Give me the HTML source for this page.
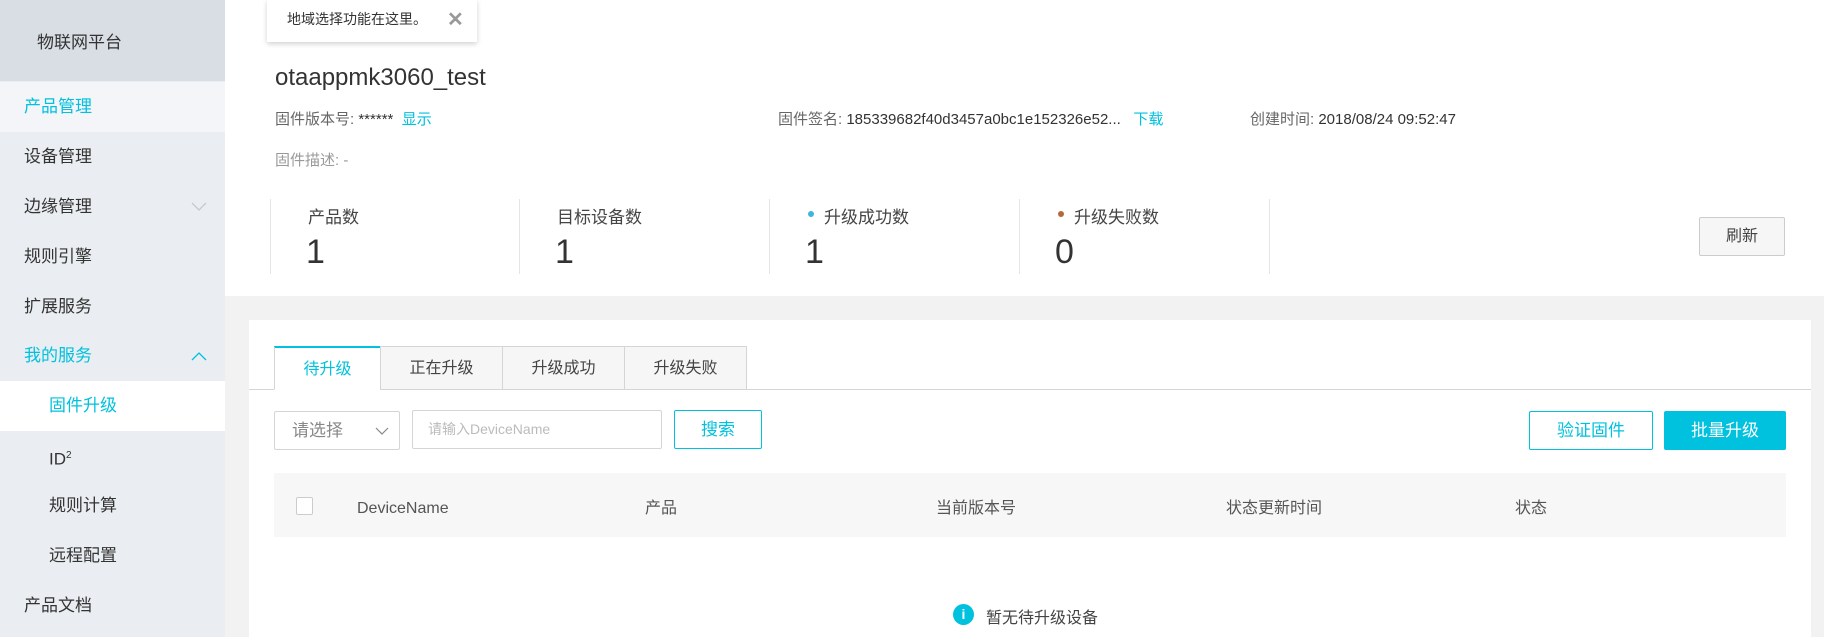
<!DOCTYPE html>
<html><head><meta charset="utf-8"><style>
*{margin:0;padding:0;box-sizing:border-box}
body{width:1824px;height:637px;overflow:hidden;background:#f2f2f2;font-family:"Liberation Sans","Noto Sans CJK SC",sans-serif;color:#333;position:relative}
.a{position:absolute;white-space:nowrap}
.side{left:0;top:0;width:225px;height:637px;background:#eaedf1}
.mi{position:absolute;left:0;width:225px;height:50px;line-height:50px;font-size:17px;color:#333;padding-left:24px}
.sub{padding-left:49px}
.c{color:#00c1de}
.lbl{font-size:15px;color:#666}
.btn{position:absolute;height:39px;line-height:37px;text-align:center;font-size:17px;border-radius:2px}
.tab{position:absolute;top:346px;height:44px;line-height:44px;text-align:center;font-size:16px;border:1px solid #d5d5d5;background:#f6f6f6;color:#444}
.th{position:absolute;top:499px;font-size:16px;color:#555;line-height:20px;height:20px}
</style></head><body>
<div class="a side"></div>
<div class="a" style="left:0;top:0;width:225px;height:81px;background:#d9dde4"></div>
<div class="a" style="left:37px;top:28px;font-size:17px;color:#333">物联网平台</div>
<div class="mi c" style="top:82px;background:#f4f5f8">产品管理</div>
<div class="mi" style="top:132px">设备管理</div>
<div class="mi" style="top:182px">边缘管理<svg style="position:absolute;left:191px;top:20px" width="16" height="10"><path d="M1 1l7 7 7-7" fill="none" stroke="#c5c9d0" stroke-width="1.3"/></svg></div>
<div class="mi" style="top:232px">规则引擎</div>
<div class="mi" style="top:282px">扩展服务</div>
<div class="mi c" style="top:331px">我的服务<svg style="position:absolute;left:191px;top:20px" width="16" height="10"><path d="M1 9l7-7 7 7" fill="none" stroke="#00c1de" stroke-width="1.3"/></svg></div>
<div class="mi sub c" style="top:381px;background:#fff">固件升级</div>
<div class="mi sub" style="top:431px">ID<sup style="font-size:10px">2</sup></div>
<div class="mi sub" style="top:481px">规则计算</div>
<div class="mi sub" style="top:531px">远程配置</div>
<div class="mi" style="top:581px">产品文档</div>

<div class="a" style="left:225px;top:0;width:1599px;height:296px;background:#fff"></div>
<div class="a" style="left:267px;top:0;width:210px;height:42px;background:#fff;box-shadow:0 2px 5px rgba(0,0,0,.18);font-size:14px;line-height:38px;padding-left:20px">地域选择功能在这里。<span style="position:absolute;left:180px;top:1px;font-size:20px;color:#999;font-weight:bold">✕</span></div>
<div class="a" style="left:275px;top:64px;font-size:24px;color:#333">otaappmk3060_test</div>
<div class="a lbl" style="left:275px;top:108px">固件版本号: <span style="color:#333">******</span>&nbsp; <span class="c">显示</span></div>
<div class="a lbl" style="left:778px;top:108px">固件签名: <span style="color:#333">185339682f40d3457a0bc1e152326e52...</span>&nbsp;&nbsp; <span class="c">下载</span></div>
<div class="a lbl" style="left:1250px;top:108px">创建时间: <span style="color:#333">2018/08/24 09:52:47</span></div>
<div class="a lbl" style="left:275px;top:149px;color:#999">固件描述: -</div>
<div class="a" style="left:270px;top:199px;width:1px;height:75px;background:#e5e5e5"></div>
<div class="a" style="left:519px;top:199px;width:1px;height:75px;background:#e5e5e5"></div>
<div class="a" style="left:769px;top:199px;width:1px;height:75px;background:#e5e5e5"></div>
<div class="a" style="left:1019px;top:199px;width:1px;height:75px;background:#e5e5e5"></div>
<div class="a" style="left:1269px;top:199px;width:1px;height:75px;background:#e5e5e5"></div>
<div class="a" style="left:308px;top:203px;font-size:17px;color:#444">产品数</div>
<div class="a" style="left:557px;top:203px;font-size:17px;color:#444">目标设备数</div>
<div class="a" style="left:808px;top:211px;width:6px;height:6px;border-radius:3px;background:#3fb4dd"></div>
<div class="a" style="left:824px;top:203px;font-size:17px;color:#444">升级成功数</div>
<div class="a" style="left:1058px;top:211px;width:6px;height:6px;border-radius:3px;background:#b5693a"></div>
<div class="a" style="left:1074px;top:203px;font-size:17px;color:#444">升级失败数</div>
<div class="a" style="left:306px;top:233px;font-size:34px;color:#333">1</div>
<div class="a" style="left:555px;top:233px;font-size:34px;color:#333">1</div>
<div class="a" style="left:805px;top:233px;font-size:34px;color:#333">1</div>
<div class="a" style="left:1055px;top:233px;font-size:34px;color:#333">0</div>
<div class="btn" style="left:1699px;top:217px;width:86px;border:1px solid #ccc;background:#f6f6f6;color:#444;font-size:16px">刷新</div>

<div class="a" style="left:249px;top:320px;width:1562px;height:317px;background:#fff"></div>
<div class="a" style="left:249px;top:389px;width:1562px;height:1px;background:#d5d5d5"></div>
<div class="tab" style="left:274px;width:107px;background:#fff;border-top:2px solid #00c1de;border-bottom:1px solid #fff;color:#00c1de">待升级</div>
<div class="tab" style="left:380px;width:123px">正在升级</div>
<div class="tab" style="left:502px;width:123px">升级成功</div>
<div class="tab" style="left:624px;width:123px">升级失败</div>
<div class="btn" style="left:274px;top:411px;width:126px;border:1px solid #d5d5d5;text-align:left;padding-left:17px;color:#888">请选择<svg style="position:absolute;left:100px;top:15px" width="14" height="9"><path d="M1 1l6 6 6-6" fill="none" stroke="#888" stroke-width="1.2"/></svg></div>
<div class="btn" style="left:412px;top:410px;width:250px;border:1px solid #d5d5d5;text-align:left;padding-left:15px;color:#bbb;font-size:14px">请输入DeviceName</div>
<div class="btn" style="left:674px;top:410px;width:88px;border:1px solid #00c1de;color:#00c1de">搜索</div>
<div class="btn" style="left:1529px;top:411px;width:124px;border:1px solid #00c1de;color:#00c1de">验证固件</div>
<div class="btn" style="left:1664px;top:411px;width:122px;background:#00c1de;border:1px solid #00c1de;color:#fff">批量升级</div>
<div class="a" style="left:274px;top:473px;width:1512px;height:64px;background:#f7f7f7"></div>
<div class="a" style="left:296px;top:497px;width:17px;height:18px;border:1px solid #ccc;border-radius:2px;background:#fff"></div>
<div class="th" style="left:357px">DeviceName</div>
<div class="th" style="left:645px">产品</div>
<div class="th" style="left:936px">当前版本号</div>
<div class="th" style="left:1226px">状态更新时间</div>
<div class="th" style="left:1515px">状态</div>
<div class="a" style="left:953px;top:604px;width:21px;height:21px;border-radius:50%;background:#00c1de;color:#fff;font-size:14px;font-weight:bold;text-align:center;line-height:21px">i</div>
<div class="a" style="left:986px;top:604px;font-size:16px;color:#444">暂无待升级设备</div>
</body></html>
